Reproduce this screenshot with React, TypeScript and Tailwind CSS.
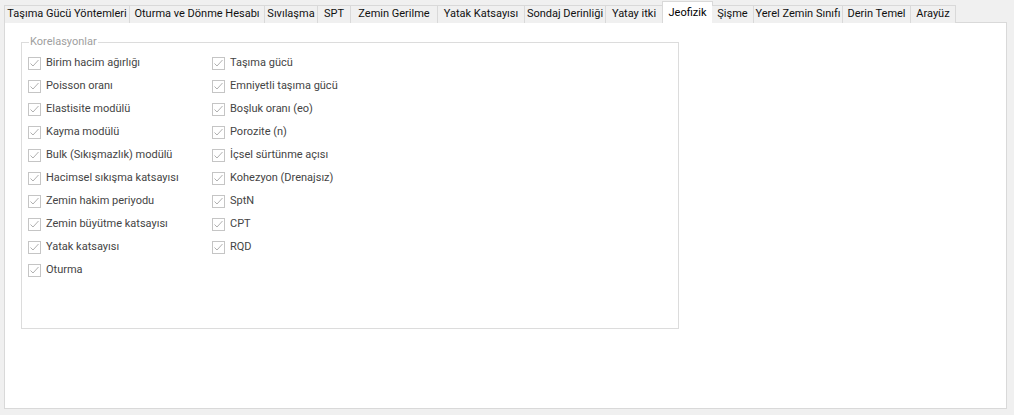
import React from 'react';

const tabs = [
  { label: 'Taşıma Gücü Yöntemleri', w: 126 },
  { label: 'Oturma ve Dönme Hesabı', w: 135 },
  { label: 'Sıvılaşma', w: 53 },
  { label: 'SPT', w: 33 },
  { label: 'Zemin Gerilme', w: 87 },
  { label: 'Yatak Katsayısı', w: 87 },
  { label: 'Sondaj Derinliği', w: 81 },
  { label: 'Yatay itki', w: 57 },
  { label: 'Jeofizik', w: 51, active: true },
  { label: 'Şişme', w: 42 },
  { label: 'Yerel Zemin Sınıfı', w: 89 },
  { label: 'Derin Temel', w: 68 },
  { label: 'Arayüz', w: 45 },
];

const left = [
  'Birim hacim ağırlığı',
  'Poisson oranı',
  'Elastisite modülü',
  'Kayma modülü',
  'Bulk (Sıkışmazlık) modülü',
  'Hacimsel sıkışma katsayısı',
  'Zemin hakim periyodu',
  'Zemin büyütme katsayısı',
  'Yatak katsayısı',
  'Oturma',
];

const right = [
  'Taşıma gücü',
  'Emniyetli taşıma gücü',
  'Boşluk oranı (eo)',
  'Porozite (n)',
  'İçsel sürtünme açısı',
  'Kohezyon (Drenajsız)',
  'SptN',
  'CPT',
  'RQD',
];

function Check({ label }: { label: string }) {
  return (
    <div className="flex items-center h-[23px]">
      <span className="w-[13px] h-[13px] border border-[#c5c5c5] bg-white flex items-center justify-center shrink-0">
        <svg width="11" height="11" viewBox="0 0 11 11">
          <polyline points="1.5,5.5 4,8 9.5,2" fill="none" stroke="#b0b0b0" strokeWidth="1" />
        </svg>
      </span>
      <span className="ml-[5px] text-[#444] whitespace-nowrap">{label}</span>
    </div>
  );
}

export default function App() {
  return (
    <div
      className="w-[1014px] h-[415px] bg-[#f0f0f0] pt-[1px] pl-[4px] overflow-hidden text-[11px]"
      style={{ fontFamily: 'Roboto, "Segoe UI", sans-serif' }}
    >
      <div className="flex items-end h-[22px] relative z-10">
        {tabs.map((t) =>
          t.active ? (
            <div
              key={t.label}
              style={{ width: t.w }}
              className="h-[22px] bg-white border border-b-0 border-[#d9d9d9] -ml-px -mr-px flex items-start justify-center pt-[3px] text-black whitespace-nowrap"
            >
              {t.label}
            </div>
          ) : (
            <div
              key={t.label}
              style={{ width: t.w }}
              className="h-[18px] border border-b-0 border-l-0 first:border-l border-[#d9d9d9] bg-[#f0f0f0] flex items-center justify-center text-[#111] whitespace-nowrap"
            >
              {t.label}
            </div>
          )
        )}
      </div>
      <div className="-mt-px w-[1003px] h-[387px] bg-white border border-[#d9d9d9] pt-[11px] pl-[16px]">
        <fieldset className="w-[658px] h-[295px] border border-[#dcdcdc] pl-[6px] pt-0">
          <legend className="ml-[1px] px-[1px] text-[#a0a0a0]">Korelasyonlar</legend>
          <div className="flex mt-[1px]">
            <div className="w-[184px] flex flex-col">
              {left.map((l) => (
                <Check key={l} label={l} />
              ))}
            </div>
            <div className="flex flex-col">
              {right.map((l) => (
                <Check key={l} label={l} />
              ))}
            </div>
          </div>
        </fieldset>
      </div>
    </div>
  );
}
